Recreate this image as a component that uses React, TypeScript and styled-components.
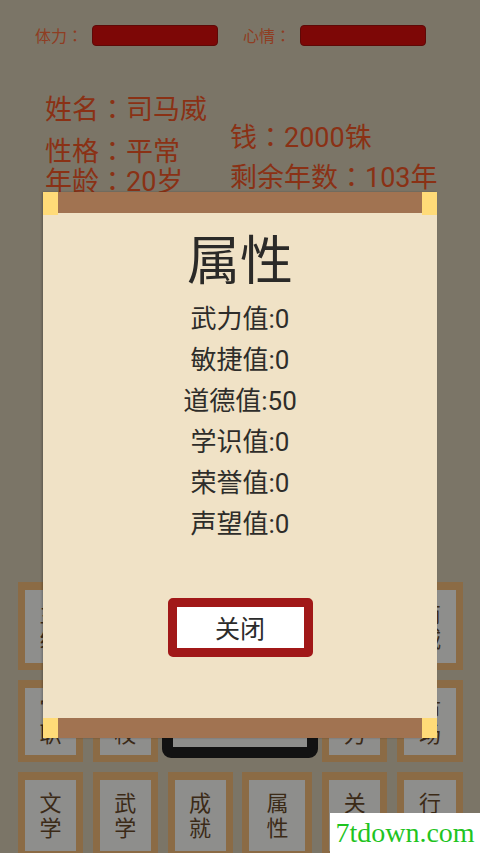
import React from 'react'
import styled, { createGlobalStyle } from 'styled-components'

const GlobalStyle = createGlobalStyle`
  html, body {
    margin: 0;
    padding: 0;
    background: #7b7567;
  }
  body {
    font-family: Roboto, "Noto Sans CJK SC", "Noto Sans", sans-serif;
  }
`

const Screen = styled.div`
  position: relative;
  width: 480px;
  height: 853px;
  overflow: hidden;
  background: #7b7567;
`

// full-width colon sits centred in the reference, as in JP punctuation
const Colon = styled.span`
  font-family: "Noto Sans CJK JP", sans-serif;
`

const StatusBar = styled.div`
  display: flex;
  align-items: center;
  height: 21px;
  padding: 25px 0 0 35px;
`

const StatusLabel = styled.span<{ $ml?: number }>`
  font-size: 16px;
  line-height: 21px;
  color: #8f3d22;
  white-space: nowrap;
  margin-left: ${({ $ml }) => $ml ?? 0}px;
`

const Meter = styled.div`
  width: 126px;
  height: 21px;
  box-sizing: border-box;
  margin-left: 9px;
  border-radius: 4px;
  border: 1px solid #5e0907;
  background: #7d0706;
`

const InfoArea = styled.div`
  display: grid;
  grid-template-columns: 185px auto;
  padding: 47px 0 0 45px;
`

const InfoColumn = styled.div<{ $top?: number }>`
  display: flex;
  flex-direction: column;
  padding-top: ${({ $top }) => $top ?? 0}px;
`

const InfoLine = styled.div<{ $gap?: number }>`
  height: 30px;
  font-size: 27px;
  line-height: 30px;
  color: #8a3115;
  white-space: nowrap;
  margin-top: ${({ $gap }) => $gap ?? 0}px;
`

const Keypad = styled.div`
  display: flex;
  flex-direction: column;
  gap: 10px;
  margin-top: 387px;
  padding: 0 17px 0 18px;
`

const KeyRow = styled.div<{ $h: number }>`
  display: grid;
  grid-template-columns: 65px 65px 65px 70px 65px 66px;
  justify-content: space-between;
  height: ${({ $h }) => $h}px;
`

const Key = styled.div`
  box-sizing: border-box;
  display: flex;
  flex-direction: column;
  align-items: center;
  justify-content: center;
  border: 7px solid #8b6b45;
  border-top-width: 8px;
  background: #8e8e8c;
  font-size: 22px;
  line-height: 25px;
  color: #3b2a17;
`

const Screenlet = styled.div`
  grid-column: span 2;
  margin: 0 -6px;
  height: 78px;
  box-sizing: border-box;
  border: 11px solid #121212;
  border-radius: 9px;
  background: #8e8e8c;
`

const Dialog = styled.div`
  position: absolute;
  left: 43px;
  top: 192px;
  width: 394px;
  height: 546px;
  display: flex;
  flex-direction: column;
  background: #f0e2c6;
  box-shadow: -1px 0 2px rgba(0, 0, 0, 0.25);
`

const Rail = styled.div<{ $h: number }>`
  display: flex;
  justify-content: space-between;
  height: ${({ $h }) => $h}px;
  background: #a17351;
`

const Knob = styled.div<{ $h: number }>`
  width: 15px;
  height: ${({ $h }) => $h}px;
  background: #ffdb78;
  position: relative;
  z-index: 1;
`

const DialogBody = styled.div`
  flex: 1;
  display: flex;
  flex-direction: column;
  align-items: center;
`

const Title = styled.div`
  margin-top: 18px;
  height: 62px;
  font-size: 53px;
  line-height: 62px;
  color: #2b2a28;
`

const AttrList = styled.div`
  margin-top: 6px;
  display: flex;
  flex-direction: column;
  align-items: center;
`

const Attr = styled.div`
  height: 41px;
  font-size: 26px;
  line-height: 41px;
  color: #2e2d2a;
  white-space: nowrap;
`

const CloseButton = styled.button`
  margin-top: 53px;
  width: 145px;
  height: 59px;
  box-sizing: border-box;
  border: 9px solid #a11818;
  border-radius: 5px;
  background: #ffffff;
  font-family: "Noto Sans CJK SC", sans-serif;
  font-size: 25px;
  line-height: 1;
  color: #2b2b2b;
  padding: 0;
`

const Watermark = styled.div`
  position: absolute;
  right: 0;
  bottom: 0;
  width: 150px;
  height: 40px;
  background: #ffffff;
  display: flex;
  align-items: center;
  justify-content: center;
  font-family: "Liberation Serif", serif;
  font-size: 28px;
  color: #1fc41f;
`

const KeyLabel: React.FC<{ text: string }> = ({ text }) => (
  <Key>
    {text.split('').map((c, i) => (
      <span key={i}>{c}</span>
    ))}
  </Key>
)

const Pair: React.FC<{ k: string; v: string }> = ({ k, v }) => (
  <>
    {k}
    <Colon>：</Colon>
    {v}
  </>
)

const attrs = ['武力值:0', '敏捷值:0', '道德值:50', '学识值:0', '荣誉值:0', '声望值:0']

export default function App() {
  return (
    <>
      <GlobalStyle />
      <Screen>
        <StatusBar>
          <StatusLabel>
            <Pair k="体力" v="" />
          </StatusLabel>
          <Meter />
          <StatusLabel $ml={25}>
            <Pair k="心情" v="" />
          </StatusLabel>
          <Meter />
        </StatusBar>

        <InfoArea>
          <InfoColumn>
            <InfoLine>
              <Pair k="姓名" v="司马威" />
            </InfoLine>
            <InfoLine $gap={12}>
              <Pair k="性格" v="平常" />
            </InfoLine>
            <InfoLine>
              <Pair k="年龄" v="20岁" />
            </InfoLine>
          </InfoColumn>
          <InfoColumn $top={28}>
            <InfoLine>
              <Pair k="钱" v="2000铢" />
            </InfoLine>
            <InfoLine $gap={10}>
              <Pair k="剩余年数" v="103年" />
            </InfoLine>
          </InfoColumn>
        </InfoArea>

        <Keypad>
          <KeyRow $h={88}>
            <KeyLabel text="主线" />
            <KeyLabel text="家族" />
            <KeyLabel text="地图" />
            <KeyLabel text="事件" />
            <KeyLabel text="物品" />
            <KeyLabel text="商城" />
          </KeyRow>
          <KeyRow $h={82}>
            <KeyLabel text="官职" />
            <KeyLabel text="学校" />
            <Screenlet />
            <KeyLabel text="势力" />
            <KeyLabel text="市场" />
          </KeyRow>
          <KeyRow $h={86}>
            <KeyLabel text="文学" />
            <KeyLabel text="武学" />
            <KeyLabel text="成就" />
            <KeyLabel text="属性" />
            <KeyLabel text="关系" />
            <KeyLabel text="行动" />
          </KeyRow>
        </Keypad>

        <Dialog>
          <Rail $h={21}>
            <Knob $h={23} />
            <Knob $h={23} />
          </Rail>
          <DialogBody>
            <Title>属性</Title>
            <AttrList>
              {attrs.map((a) => (
                <Attr key={a}>{a}</Attr>
              ))}
            </AttrList>
            <CloseButton>关闭</CloseButton>
          </DialogBody>
          <Rail $h={20}>
            <Knob $h={20} />
            <Knob $h={20} />
          </Rail>
        </Dialog>

        <Watermark>7tdown.com</Watermark>
      </Screen>
    </>
  )
}
